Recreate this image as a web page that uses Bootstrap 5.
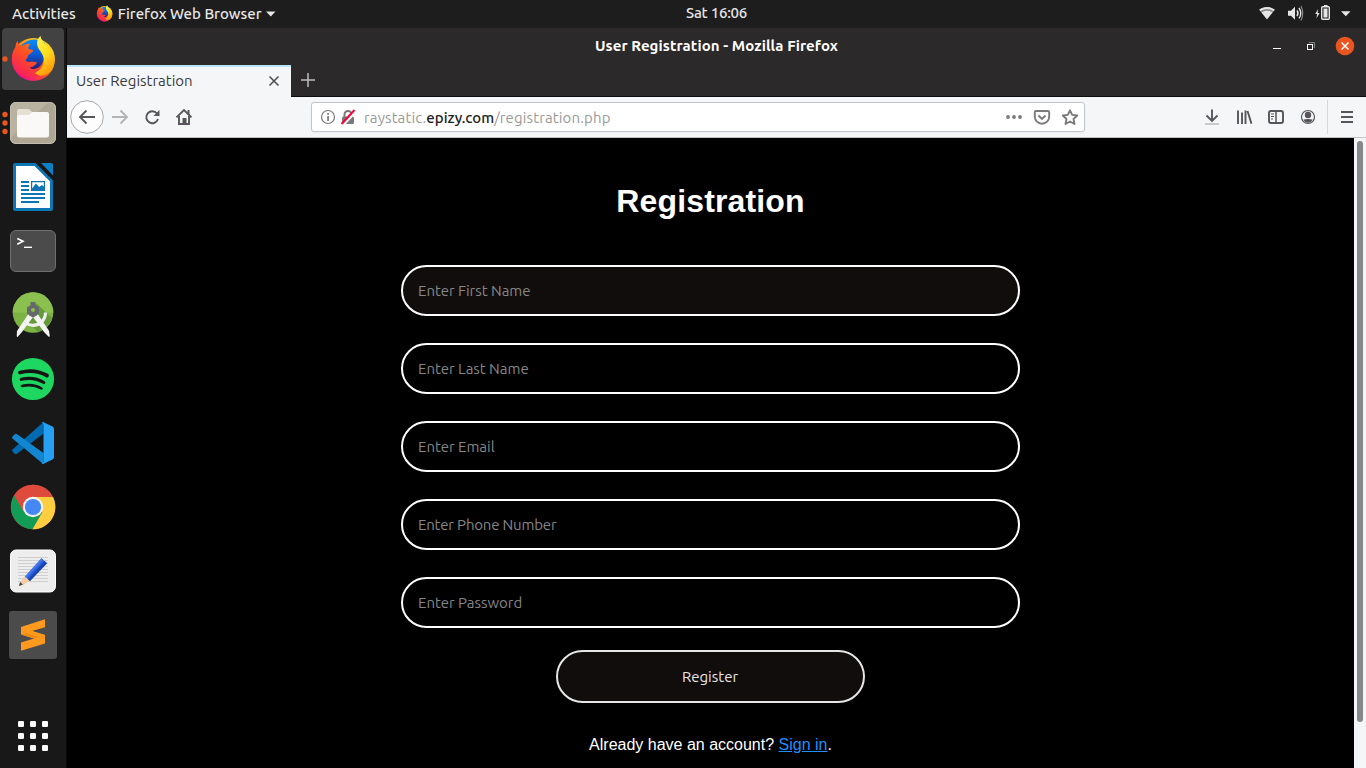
<!DOCTYPE html>
<html lang="en">
<head>
<meta charset="utf-8">
<meta name="viewport" content="width=device-width, initial-scale=1">
<title>User Registration - Mozilla Firefox</title>
<link href="https://cdn.jsdelivr.net/npm/bootstrap@5.3.0/dist/css/bootstrap.min.css" rel="stylesheet">
<style>
  body { font-family: Ubuntu, "Noto Sans", sans-serif; font-size: 15px; line-height: 20px; background: #000; }
  svg { display: block; flex: none; }
  .desk { height: 768px; }
  .topbar { height: 28px; background: #1d1d1d; color: #e6e6e6; font-weight: 500; }
  .topbar .side { flex: 1 1 0; }
  .topbar .clock { letter-spacing: -.25px; padding: 0 0 2px 67px; }
  .dock { width: 67px; padding-left: 2px; background: #181818; border-right: 1px solid #080808; }
  .dock a { height: 62px; margin-bottom: 2px; width: 62px; border-radius: 4px; }
  .dock a.running { background: #424242; }
  .titlebar { height: 37px; background: #2c292a; color: #fff; font-weight: 700; letter-spacing: .08px; }
  .titlebar span { padding-bottom: 2px; }
  .titlebar .winbtns { width: 100px; }
  .tabstrip { height: 32px; background: #2c292a; border-bottom: 1px solid #0c0c0d; }
  .tab-on { width: 224px; height: 32px; background: #f5f6f7; border-top: 2px solid #b9e6f8; color: #3b3b3e; padding: 0 10px 2px 9px; }
  .toolbar { height: 41px; background: #f5f6f7; border-bottom: 1px solid #c2c3c5; padding-left: 3px; }
  .urlbox { width: 774px; height: 30px; margin-left: 109px; background: #fff; border: 1px solid #c2c6cc; border-radius: 3px; color: #999; box-shadow: 0 1px 3px rgba(0,0,0,.05); letter-spacing: .13px; }
  .urlbox > span { padding-top: 2px; }
  .urlbox b { font-weight: 500; color: #222; letter-spacing: 0; }
  .page { background: #000; color: #fff; }
  .page h1 { font: 700 32px/37px "Liberation Sans", Arial, sans-serif; margin: 45px 0; letter-spacing: .15px; }
  .reg-form { width: 619px; }
  .reg-form .form-control { height: 51px; margin-bottom: 27px; padding: 0 15px; border: 2px solid #fff; border-radius: 25.5px; background: #000; color: #fff; font-size: 15px; }
  .reg-form .form-control.hot { background: #120d0d; }
  .reg-form .form-control::placeholder { color: #868686; opacity: 1; letter-spacing: -.03px; }
  .reg-form [type=tel]::placeholder { letter-spacing: -.19px; }
  .reg-form .btn { width: 309px; height: 53px; margin-top: -5px; border: 2px solid #e6e6e6; border-radius: 26.5px; background: #120d0d; color: #e6e6e6; font-size: 15px; padding: 2px 1px 0 0; }
  .signin { font: 16px/18px "Liberation Sans", Arial, sans-serif; margin-top: 33px; }
  .signin a { color: #1e90ff; }
  .scroller { width: 12px; background: #f5f6f7; padding: 3px 3px 0; }
  .scroller div { width: 6px; height: 581px; border-radius: 3px; background: #868889; }
</style>
</head>
<body class="overflow-hidden">
<svg width="0" height="0" class="position-absolute">
  <defs>
    <linearGradient id="fxBody" x1=".85" y1=".1" x2=".2" y2=".9"><stop offset="0" stop-color="#ffe226"/><stop offset=".35" stop-color="#ff9a0e"/><stop offset=".65" stop-color="#ff4a2a"/><stop offset="1" stop-color="#f0108a"/></linearGradient>
    <linearGradient id="fxFlame" x1=".2" y1="0" x2=".6" y2="1"><stop offset="0" stop-color="#fff44f"/><stop offset=".5" stop-color="#ffdf1e"/><stop offset="1" stop-color="#ff9408"/></linearGradient>
    <linearGradient id="fxHead" x1=".9" y1="0" x2=".2" y2="1"><stop offset="0" stop-color="#ff8a16"/><stop offset=".5" stop-color="#ff4f22"/><stop offset="1" stop-color="#f51a62"/></linearGradient>
    <linearGradient id="fxGlobe" x1=".5" y1="0" x2=".5" y2="1"><stop offset="0" stop-color="#0a8cf5"/><stop offset=".5" stop-color="#0a5bd6"/><stop offset="1" stop-color="#2a1a6e"/></linearGradient>
    <symbol id="firefox" viewBox="10 35 46 47">
      <circle cx="33.300" cy="59.500" r="21.500" fill="url(#fxBody)"/>
      <path d="M20 47Q26 39.500 34 39.500Q40 39.500 45 43L44 62Q38 71 31 69Q22 62 20 47Z" fill="url(#fxGlobe)"/>
      <path d="M12 60C11.500 54 14 49.500 15.500 47.500C15.500 44.500 16 42.500 17.500 41C18 44 19.500 45.500 22 46C25 44 28 43.500 30.500 44C28.500 45.500 28 47.500 28.500 49L33 50C33.500 52 29 54 28 55.500C28 58 26 58.500 25.500 60.500C28.500 63.500 32 60.500 37 62.500C35 66.500 32 66.500 29.500 68C36 71 42 66.500 43.500 60L48 63C49 70 43 76 33 77C20 78 13 70 12 60Z" fill="url(#fxHead)"/>
      <path d="M40.500 36C37 39 36 44 38.500 48.500C41 52.500 44 55 43.700 61C43.400 66.500 40 70.500 35 73C41 78 49 75 52.500 69C56 62 55 53 51.500 48.500C51.700 50 51 51 51 52C49.500 46 41.500 43 40.500 36Z" fill="url(#fxFlame)"/>
    </symbol>
  </defs>
</svg>
<div class="desk d-flex flex-column">
  <header class="topbar d-flex align-items-center">
    <div class="side d-flex align-items-center">
      <span class="ms-2 ps-1">Activities</span>
      <svg class="ms-3" width="26" height="18" viewBox="0 0 26 18"><use href="#firefox" x="4" y="0" width="17" height="17"/></svg>
      <span class="text-nowrap">Firefox Web Browser</span>
      <svg class="ms-1" width="12" height="8" viewBox="1 0 12 8"><path d="M1 1.500h9.500l-4.700 5z" fill="#e6e6e6"/></svg>
    </div>
    <span class="clock">Sat 16:06</span>
    <div class="side d-flex justify-content-end">
      <svg width="112" height="28" viewBox="1254 0 112 28" fill="#e6e6e6">
        <path d="M1259 9.500C1263.500 6 1270.500 6 1275 9.500L1267 19.500Z" fill="#8a8a8a"/>
        <path d="M1259.400 9.800C1264 6.200 1270 6.200 1274.600 9.800L1273.500 11.200C1269.500 8.200 1264.500 8.200 1260.500 11.200ZM1261.500 12.500C1265 10.300 1269 10.300 1272.500 12.500L1267 19.300Z"/>
        <path d="M1288 10.800h3l4-4v13l-4-4h-3z"/>
        <path d="M1297 10.500q2 2.800 0 5.600M1299 8q3.600 5.200 0 10.400" fill="none" stroke="#e6e6e6" stroke-width="1.400"/><path d="M1301 6q3.500 7.500 0 14.500" fill="none" stroke="#888" stroke-width="1.200"/>
        <path d="M1318.200 9l-3 5h2l-.8 4.500 3.200-5.500h-2z"/>
        <path d="M1324 5h3.500v1.500h-3.500z"/><rect x="1321.700" y="6.700" width="7.600" height="12.600" rx="1" fill="none" stroke="#e6e6e6" stroke-width="1.400"/><rect x="1323.500" y="8.500" width="4" height="9"/>
        <path d="M1341 11.300h9.500l-4.700 5z"/>
      </svg>
    </div>
  </header>

  <div class="d-flex flex-grow-1">
    <nav class="dock d-flex flex-column flex-shrink-0" aria-label="Dock">
      <a class="running"><svg width="62" height="62" viewBox="2 28 62 62"><circle cx="5" cy="59" r="2.700" fill="#e95420"/><use href="#firefox" x="10" y="35" width="46" height="47"/></svg></a>
      <a><svg width="62" height="62" viewBox="2 92 62 62">
        <g fill="#e95420"><circle cx="5" cy="114.500" r="2.700"/><circle cx="5" cy="123" r="2.700"/><circle cx="5" cy="131.500" r="2.700"/></g>
        <rect x="10" y="102" width="46" height="42" rx="6" fill="#aea794"/><path d="M16 102.500h32L10.500 138V108q0-5.500 5.500-5.500z" fill="#b8b2a1"/><rect x="10.500" y="102.500" width="45" height="41" rx="5.500" fill="none" stroke="#c2bdae"/>
        <path d="M17 120v-9q0-2 2-2h9q1.500 0 2.500 1.500L32 112h10v8z" fill="#e5dfd4"/><path d="M17 116.500q0-1.500 1.500-1.500H28q1.500 0 2.300-1.200L31 113q.7-1 2-1h14q2 0 2 2v21q0 2.500-2.500 2.500h-27Q17 137.500 17 135z" fill="#faf9f7"/>
      </svg></a>
      <a><svg width="62" height="62" viewBox="2 156 62 62">
        <path d="M15 163h20.500L53 180.500V209q0 2-2 2H15q-2 0-2-2V165q0-2 2-2z" fill="#0e75b5"/><path d="M41 163h10q2 0 2 2v10.500z" fill="#0d7fc4"/><path d="M16 166h18.500L50 181.500V208H16z" fill="#fff"/>
        <g fill="#0e75b5"><path d="M21 181h8v2h-8zM21 185h8v2h-8zM21 189h8v2h-8zM21 193h24v2H21zM21 197h24v2H21zM21 201h18v2H21zM31 181h14v10H31z"/></g>
        <path d="M32.200 182.200h11.600v4.300l-2-1.500-2.500 2-3.500-3.500-3.600 5z" fill="#fff"/>
      </svg></a>
      <a><svg width="62" height="62" viewBox="2 220 62 62">
        <rect x="10.500" y="230.500" width="45" height="41" rx="5.500" fill="#4b4b4b" stroke="#707070"/>
        <path d="M17.300 238.500l5.700 2.800-5.700 2.900" fill="none" stroke="#fff" stroke-width="1.600"/><path d="M24 246.600h8v1.400h-8z" fill="#fff"/>
      </svg></a>
      <a><svg width="62" height="62" viewBox="2 284 62 62">
        <circle cx="33" cy="312.500" r="20.300" fill="#7cb342"/><path d="M12.700 312.500a20.300 20.300 0 0 1 40.600 0z" fill="#8bbf4f"/>
        <path d="M36 303l16 15q-4 11-14 14l-11-11z" fill="#659a38"/>
        <path d="M24.500 322.500q10 6 17.500-1 3.500-3.500 3.500-9" fill="none" stroke="#eee" stroke-width="3.200"/>
        <path d="M29 313l4 4-11 15-4.500 5-.8-.5.300-5.500zM37 313l-4 4 11 15 5 5 .8-.8-.8-5.500z" fill="#f4f4f4"/>
        <path d="M30.500 302h5v3.200l3.500 2v6.300l-3 2.500-3 1.500-3-1.500-3-2.500v-6.300l3.500-2z" fill="#66696c"/><circle cx="33" cy="310" r="2" fill="#8bbf4f"/>
      </svg></a>
      <a><svg width="62" height="62" viewBox="2 348 62 62">
        <circle cx="33" cy="379" r="21.100" fill="#1ed760"/>
        <g fill="none" stroke="#141414" stroke-linecap="round"><path d="M20 372.500q14.500-4 27 3" stroke-width="3.800"/><path d="M21.300 379.300q12.500-3 22.500 3.200" stroke-width="3.200"/><path d="M22 386q11-2.500 19.500 2.500" stroke-width="2.600"/></g>
      </svg></a>
      <a><svg width="62" height="62" viewBox="2 412 62 62">
        <path d="M12.500 449.500L43.500 422v11.500L17 453.800q-1.200.8-2.200 0l-2.300-2.300q-1-1 0-2z" fill="#0069b0"/>
        <path d="M12.500 436.500l2.300-2.200q1.200-1 2.300 0L43.500 453v11.200L12.500 438.500q-1-1 0-2z" fill="#1287d0"/>
        <path d="M43 422l9.500 4.500q1.500.8 1.500 2.300v28.400q0 1.500-1.500 2.300L43 464q-1 0-1.500-.8 2 .5 2-2V425q0-2.500-2-2.200z" fill="#26a0f2"/>
      </svg></a>
      <a><svg width="62" height="62" viewBox="2 476 62 62">
        <circle cx="33" cy="507" r="22.200" fill="#de4a3c"/>
        <path d="M14.200 495.500A22.200 22.200 0 0 0 32.500 529.200L43 511.500 33 507z" fill="#129d57"/>
        <path d="M33 497h20A22.200 22.200 0 0 1 32.500 529.200L42.500 512z" fill="#ffcd40"/>
        <path d="M14.200 495.500L24 512.500l4-12 5-3.500h20a22.200 22.200 0 0 0-38.800-1.500z" fill="#de4a3c"/>
        <circle cx="33" cy="507" r="10.200" fill="#f4f4f4"/><circle cx="33" cy="507" r="8.100" fill="#4587f4"/>
      </svg></a>
      <a><svg width="62" height="62" viewBox="2 540 62 62">
        <rect x="10.500" y="550" width="45" height="42" rx="5.500" fill="#ededed" stroke="#fff"/>
        <path d="M18 557.500h30M18 560.500h30M18 563.500h30M18 566.500h30M18 569.500h30M18 572.500h30M18 575.500h30M18 578.500h30M18 581.500h30" stroke="#cfcfcf"/>
        <path d="M25 576l5 5-7 4-4 1 1.500-4z" fill="#f2cda8"/><path d="M20 582l-1 4 4-1.500z" fill="#444"/>
        <path d="M25 576.500l16.500-18.200 5.500 5L30 581z" fill="#2d5fdb"/><path d="M28 579.500L44.500 561l2.500 2.300L30 581z" fill="#1b44b0"/><path d="M25 576.500l16.500-18.200 1.500 1.400L26.500 578z" fill="#4577ee"/>
      </svg></a>
      <a><svg width="62" height="62" viewBox="2 604 62 62">
        <rect x="9" y="611" width="48" height="48" rx="3" fill="#4b4b4b"/>
        <path d="M21 627l24-7.800v8L32 631l13 4v8.500L21 650.800v-8.300l13-4-13-4z" fill="#ff9a1f"/><path d="M32 631l13 4v5L21 631z" fill="#ff9a1f"/><path d="M21 634.500l13 4 5-1.500-13-4z" fill="#ef8a12"/>
      </svg></a>
      <a class="mt-auto"><svg width="62" height="62" viewBox="2 704 62 62"><g fill="#fafafa">
        <rect x="18" y="721" width="6" height="6" rx="1.200"/><rect x="30" y="721" width="6" height="6" rx="1.200"/><rect x="42" y="721" width="6" height="6" rx="1.200"/>
        <rect x="18" y="733" width="6" height="6" rx="1.200"/><rect x="30" y="733" width="6" height="6" rx="1.200"/><rect x="42" y="733" width="6" height="6" rx="1.200"/>
        <rect x="18" y="745" width="6" height="6" rx="1.200"/><rect x="30" y="745" width="6" height="6" rx="1.200"/><rect x="42" y="745" width="6" height="6" rx="1.200"/></g></svg></a>
    </nav>

    <section class="flex-grow-1 d-flex flex-column">
      <div class="titlebar d-flex align-items-center">
        <div class="winbtns"></div>
        <span class="flex-grow-1 text-center">User Registration - Mozilla Firefox</span>
        <svg class="winbtns" height="37" viewBox="1266 28 100 37">
          <path d="M1273 48h8v1h-8z" fill="#fff"/>
          <path d="M1309 42.500h5.500v5.500" fill="none" stroke="#7d8a83"/><rect x="1307.500" y="44.500" width="5" height="5" fill="none" stroke="#fff"/>
          <circle cx="1345" cy="46" r="9.300" fill="#e95420"/><path d="M1341.500 42.500l7 7m0-7l-7 7" stroke="#fff" stroke-width="1.500"/>
        </svg>
      </div>
      <div class="tabstrip d-flex">
        <div class="tab-on d-flex align-items-center justify-content-between">
          <span>User Registration</span>
          <svg width="14" height="14" viewBox="267 74 14 14"><path d="M269.500 76.500l9 9m0-9l-9 9" stroke="#4a4a4e" stroke-width="1.500"/></svg>
        </div>
        <svg width="34" height="31" viewBox="291 65 34 31"><path d="M301 80h14M308 73v14" stroke="#bcbcbc" stroke-width="1.500"/></svg>
      </div>
      <div class="toolbar d-flex align-items-center">
        <svg width="132" height="40" viewBox="70 97 132 40" fill="none" stroke="#56565a" stroke-width="1.900">
          <circle cx="87" cy="117" r="16.300" fill="#fdfdfd" stroke="#a8a8aa" stroke-width="1"/>
          <path d="M95 117H80M86.500 110.500L80 117l6.500 6.500"/>
          <path d="M112 117h15M120.500 110.500L127 117l-6.500 6.500" stroke="#b3b4b6"/>
          <path d="M157 113.500A6 6 0 1 0 158 119"/><path d="M159.500 110v6h-6z" fill="#56565a" stroke="none"/>
          <path d="M176.500 117.300L184 110l7.500 7.300" stroke-width="1.800"/><path d="M179 116v8h10v-8"/><path d="M183.500 124v-5h2v5" stroke-width="2"/><path d="M187.500 110h2v5h-2z" fill="#56565a" stroke="none"/>
        </svg>
        <div class="urlbox d-flex align-items-center">
          <svg width="52" height="28" viewBox="312 103 52 28">
            <circle cx="328" cy="117" r="6.500" fill="none" stroke="#7a7a7c" stroke-width="1.200"/><path d="M327.200 113h1.700v1.800h-1.700zM327.200 116h1.700v5h-1.700z" fill="#7a7a7c"/>
            <path d="M344.500 117v-2.500a3.500 3.500 0 0 1 7 0v2.500" fill="none" stroke="#7a7a7c" stroke-width="2"/><rect x="342" y="116.500" width="12" height="7.500" rx="1.500" fill="#7a7a7c"/>
            <path d="M343.500 125L356 111.500" stroke="#fff" stroke-width="2"/><path d="M341.500 124L354.500 110" stroke="#ff0039" stroke-width="1.900"/>
          </svg>
          <span>raystatic.<b>epizy.com</b>/registration.php</span>
          <svg class="ms-auto" width="84" height="28" viewBox="1000 103 84 28" fill="none" stroke="#7a7a7c" stroke-width="1.900">
            <g fill="#7a7a7c" stroke="none"><circle cx="1008" cy="117" r="1.900"/><circle cx="1014" cy="117" r="1.900"/><circle cx="1020" cy="117" r="1.900"/></g>
            <path d="M1036 111h12q1.200 0 1.200 1.200v4.300a7.200 7.200 0 0 1-14.400 0v-4.300q0-1.200 1.200-1.200z"/><path d="M1038.500 115.500l3.500 3.400 3.500-3.400" stroke-width="2"/>
            <path d="M1070 110.300l2.200 4.600 5 .6-3.700 3.500 1 5-4.500-2.500-4.500 2.500 1-5-3.700-3.500 5-.6z" stroke-linejoin="round"/>
          </svg>
        </div>
        <svg class="ms-auto" width="176" height="40" viewBox="1190 97 176 40" fill="none" stroke="#56565a" stroke-width="1.900">
          <path d="M1212 109.500v11M1206.500 115.500l5.500 5.500 5.500-5.500"/><path d="M1205 124h14" stroke="#c9cacb" stroke-width="2"/>
          <path d="M1238 110.500v13.500M1242 112.500v11.500M1245.500 110.500v13.500M1247.500 111l4 12.700" stroke-width="1.900"/>
          <rect x="1269" y="111" width="14" height="12" rx="2"/><path d="M1276 111v12" stroke-width="1.500"/><path d="M1271 114h3M1271 116.500h3M1271 119h2" stroke-width="1"/>
          <circle cx="1308" cy="117" r="6.500" stroke-width="1.200"/><g fill="#56565a" stroke="none"><circle cx="1308" cy="115" r="3.200"/><path d="M1303.400 119.500q4.600-1 9.200 0-1.600 3.300-4.600 3.300t-4.600-3.300z"/></g>
          <path d="M1327.500 100v34" stroke="#d7d8da" stroke-width="1"/>
          <path d="M1341 112h12M1341 117h12M1341 122h12" stroke-width="2"/>
        </svg>
      </div>
      <div class="d-flex flex-grow-1">
        <main class="page flex-grow-1 d-flex flex-column align-items-center">
          <h1>Registration</h1>
          <form class="reg-form d-flex flex-column align-items-center">
            <input class="form-control hot" type="text" placeholder="Enter First Name">
            <input class="form-control" type="text" placeholder="Enter Last Name">
            <input class="form-control" type="email" placeholder="Enter Email">
            <input class="form-control" type="tel" placeholder="Enter Phone Number">
            <input class="form-control" type="password" placeholder="Enter Password">
            <button class="btn" type="button">Register</button>
          </form>
          <p class="signin mb-0">Already have an account? <a href="#">Sign in</a>.</p>
        </main>
        <div class="scroller"><div></div></div>
      </div>
    </section>
  </div>
</div>
<script src="https://cdn.jsdelivr.net/npm/bootstrap@5.3.0/dist/js/bootstrap.bundle.min.js"></script>
</body>
</html>
